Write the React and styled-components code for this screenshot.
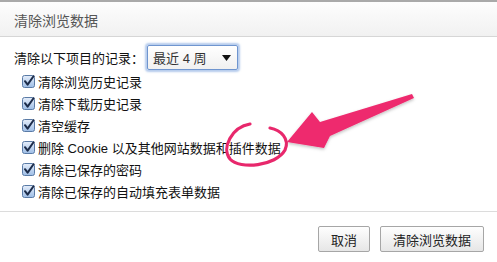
import React from 'react';
import styled, { createGlobalStyle } from 'styled-components';

const GlobalStyle = createGlobalStyle`
  html, body {
    margin: 0;
    padding: 0;
    background: #fff;
  }
  body {
    font-family: "Liberation Sans", "Noto Sans CJK SC", sans-serif;
  }
`;

const items = [
  '清除浏览历史记录',
  '清除下载历史记录',
  '清空缓存',
  '删除 Cookie 以及其他网站数据和插件数据',
  '清除已保存的密码',
  '清除已保存的自动填充表单数据',
];

const Dialog = () => {
  return (
    <Frame>
      <Header>
        <Title>清除浏览数据</Title>
      </Header>

      <Body>
        <RangeRow>
          <Label>清除以下项目的记录：</Label>
          <Select>
            <span>最近 4 周</span>
            <svg width="9" height="6" viewBox="0 0 9 6">
              <path d="M0 0 L9 0 L4.5 6 Z" fill="#111" />
            </svg>
          </Select>
        </RangeRow>

        <List>
          {items.map((text) => (
            <Item key={text}>
              <CheckBox />
              <ItemText>{text}</ItemText>
            </Item>
          ))}
        </List>
      </Body>

      <Footer>
        <Button>取消</Button>
        <Button $wide>清除浏览数据</Button>
      </Footer>

      <Annotation viewBox="0 0 497 262" width="497" height="262">
        <defs>
          <filter id="shadow" x="-10%" y="-10%" width="120%" height="130%">
            <feDropShadow dx="0" dy="1.5" stdDeviation="1.5" floodColor="#000" floodOpacity="0.25" />
          </filter>
        </defs>
        <path
          d="M250 124 C232 127, 221 148, 230 159 C240 170, 276 166, 285 150 C290 139, 281 130, 270 128"
          fill="none"
          stroke="#e8286c"
          strokeWidth="3.2"
          strokeLinecap="round"
        />
        <path
          d="M287 142 L312 112 L320 122 L412 94 L414 98 L330 136 L324 148 Z"
          fill="#ee2a6e"
          filter="url(#shadow)"
        />
      </Annotation>
    </Frame>
  );
};

const CheckBox = () => (
  <svg width="13" height="13" viewBox="0 0 13 13">
    <defs>
      <linearGradient id="cb" x1="0" y1="0" x2="0" y2="1">
        <stop offset="0" stopColor="#e6eefa" />
        <stop offset="1" stopColor="#9dbde6" />
      </linearGradient>
    </defs>
    <rect x="0.5" y="0.5" width="12" height="12" rx="2" fill="url(#cb)" stroke="#5a7ba6" />
    <path d="M3 6.2 L5.6 9.6 L11.5 1.2" fill="none" stroke="#1c2c4a" strokeWidth="2" strokeLinecap="round" strokeLinejoin="round" />
  </svg>
);

export default function App() {
  return (
    <>
      <GlobalStyle />
      <Dialog />
    </>
  );
}

const Frame = styled.div`
  position: relative;
  width: 497px;
  height: 262px;
  background: #fff;
  overflow: hidden;
  color: #111;
`;

const Header = styled.div`
  height: 34px;
  border-top: 2px solid #a9a9a9;
  border-bottom: 1px solid #d6d6d6;
  background: linear-gradient(#fdfdfd, #f1f1f1);
  display: flex;
  align-items: center;
  padding: 0 14px;
`;

const Title = styled.div`
  font-size: 14px;
  color: #555;
  padding-top: 1px;
`;

const Body = styled.div`
  padding: 8px 14px 9px;
  border-bottom: 1px solid #dcdcdc;
`;

const RangeRow = styled.div`
  display: flex;
  align-items: center;
  gap: 3px;
  height: 25px;
`;

const Label = styled.span`
  font-size: 13px;
  color: #111;
`;

const Select = styled.div`
  box-sizing: border-box;
  width: 91px;
  height: 25px;
  border: 1px solid #6f95cf;
  border-radius: 2px;
  box-shadow: 0 0 2px 2px rgba(120, 160, 220, 0.55);
  background: linear-gradient(#fff, #f0f0f0);
  display: flex;
  align-items: center;
  justify-content: space-between;
  padding: 0 6px 0 5px;
  font-size: 13px;
  color: #333;
`;

const List = styled.div`
  display: flex;
  flex-direction: column;
`;

const Item = styled.div`
  display: flex;
  align-items: center;
  height: 22px;
  padding-left: 8px;
  gap: 3px;
`;

const ItemText = styled.span`
  font-size: 13px;
  color: #111;
`;

const Footer = styled.div`
  display: flex;
  justify-content: flex-end;
  gap: 10px;
  padding: 14px 13px 0;
`;

const Button = styled.button`
  box-sizing: border-box;
  height: 26px;
  width: ${(p) => (p.$wide ? '104px' : '52px')};
  border: 1px solid #a6a6a6;
  border-radius: 2px;
  background: linear-gradient(#fefefe, #e6e6e6);
  font-family: "Liberation Sans", "Noto Sans CJK SC", sans-serif;
  font-size: 13px;
  color: #222;
  padding: 0;
`;

const Annotation = styled.svg`
  position: absolute;
  left: 0;
  top: 0;
  pointer-events: none;
`;
